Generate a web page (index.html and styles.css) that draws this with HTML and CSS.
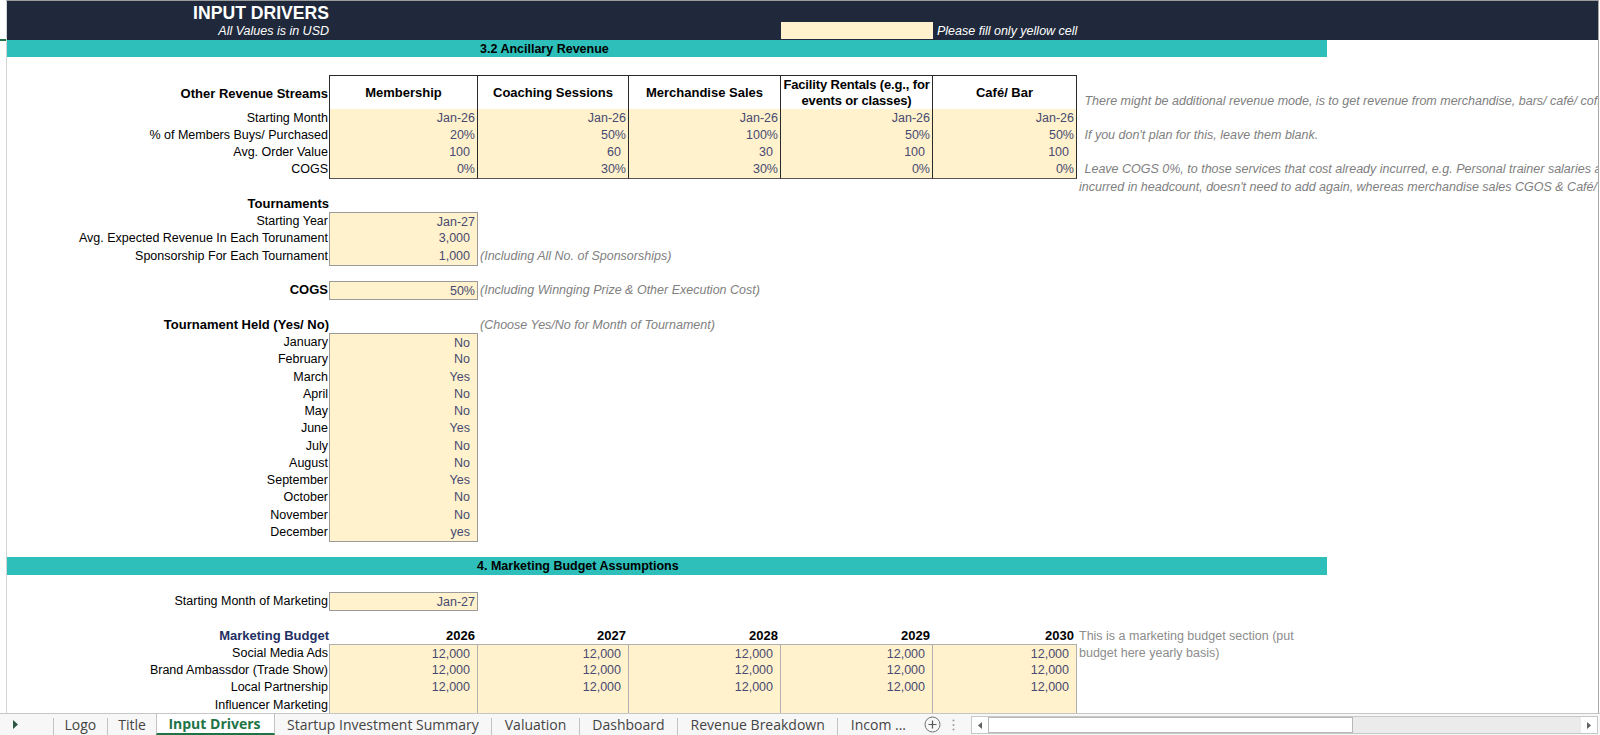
FILE: index.html
```html
<!DOCTYPE html>
<html lang="en">
<head>
<meta charset="utf-8">
<title>Input Drivers</title>
<link rel="stylesheet" href="styles.css">
</head>
<body>
<div class="app">
  <div class="sheet">
    <div class="hdr">
      <div class="hrow1"><div class="title">INPUT DRIVERS</div></div>
      <div class="grid hrow2">
        <div class="sub">All Values is in USD</div>
        <div class="hspace"></div>
        <div class="ycell"></div>
        <div class="hnote">Please fill only yellow cell</div>
      </div>
    </div>

    <div class="band band1">3.2 Ancillary Revenue</div>
    <div class="row"></div>

    <div class="grid th">
      <div class="lbl b thl">Other Revenue Streams</div>
      <div class="hc">Membership</div>
      <div class="hc">Coaching Sessions</div>
      <div class="hc">Merchandise Sales</div>
      <div class="hc tight">Facility Rentals (e.g., for<br>events or classes)</div>
      <div class="hc">Café/ Bar</div>
      <div class="note nb">&nbsp;There might be additional revenue mode, is to get revenue from merchandise, bars/ café/ coffee shop etc.</div>
    </div>
    <div class="row dk">
      <div class="lbl bd">Starting Month</div>
      <div class="k">Jan-26</div><div class="k">Jan-26</div><div class="k">Jan-26</div><div class="k">Jan-26</div><div class="k">Jan-26</div>
    </div>
    <div class="row dk">
      <div class="lbl bd">% of Members Buys/ Purchased</div>
      <div class="k">20%</div><div class="k">50%</div><div class="k">100%</div><div class="k">50%</div><div class="k">50%</div>
      <div class="note">&nbsp;If you don't plan for this, leave them blank.</div>
    </div>
    <div class="row dk">
      <div class="lbl bd">Avg. Order Value</div>
      <div class="k n">100</div><div class="k n">60</div><div class="k n">30</div><div class="k n">100</div><div class="k n">100</div>
    </div>
    <div class="row dk last">
      <div class="lbl bd">COGS</div>
      <div class="k">0%</div><div class="k">30%</div><div class="k">30%</div><div class="k">0%</div><div class="k">0%</div>
      <div class="note">&nbsp;Leave COGS 0%, to those services that cost already incurred, e.g. Personal trainer salaries are already</div>
    </div>
    <div class="row">
      <div class="lbl"></div>
      <div class="note wide">incurred in headcount, doesn't need to add again, whereas merchandise sales CGOS &amp; Café/ Bar COGS are separate.</div>
    </div>

    <div class="row"><div class="lbl b">Tournaments</div></div>
    <div class="row top">
      <div class="lbl bd">Starting Year</div>
      <div class="k">Jan-27</div>
    </div>
    <div class="row">
      <div class="lbl bd">Avg. Expected Revenue In Each Torunament</div>
      <div class="k n">3,000</div>
    </div>
    <div class="row">
      <div class="lbl bd">Sponsorship For Each Tournament</div>
      <div class="k n">1,000</div>
      <div class="note span">(Including All No. of Sponsorships)</div>
    </div>
    <div class="row"></div>
    <div class="row top">
      <div class="lbl b bd">COGS</div>
      <div class="k">50%</div>
      <div class="note span">(Including Winnging Prize &amp; Other Execution Cost)</div>
    </div>
    <div class="row"></div>
    <div class="row">
      <div class="lbl b">Tournament Held (Yes/ No)</div>
      <div class="blank"></div>
      <div class="note span">(Choose Yes/No for Month of Tournament)</div>
    </div>
    <div class="row top"><div class="lbl bd">January</div><div class="k n">No</div></div>
    <div class="row"><div class="lbl bd">February</div><div class="k n">No</div></div>
    <div class="row"><div class="lbl bd">March</div><div class="k n">Yes</div></div>
    <div class="row"><div class="lbl bd">April</div><div class="k n">No</div></div>
    <div class="row"><div class="lbl bd">May</div><div class="k n">No</div></div>
    <div class="row"><div class="lbl bd">June</div><div class="k n">Yes</div></div>
    <div class="row"><div class="lbl bd">July</div><div class="k n">No</div></div>
    <div class="row"><div class="lbl bd">August</div><div class="k n">No</div></div>
    <div class="row"><div class="lbl bd">September</div><div class="k n">Yes</div></div>
    <div class="row"><div class="lbl bd">October</div><div class="k n">No</div></div>
    <div class="row"><div class="lbl bd">November</div><div class="k n">No</div></div>
    <div class="row"><div class="lbl bd">December</div><div class="k n">yes</div></div>
    <div class="row"></div>

    <div class="band band2">4. Marketing Budget Assumptions</div>
    <div class="row"></div>
    <div class="row top">
      <div class="lbl bd">Starting Month of Marketing</div>
      <div class="k">Jan-27</div>
    </div>
    <div class="row"></div>
    <div class="row">
      <div class="lbl b navy">Marketing Budget</div>
      <div class="yr">2026</div><div class="yr">2027</div><div class="yr">2028</div><div class="yr">2029</div><div class="yr">2030</div>
      <div class="mnote">This is a marketing budget section (put</div>
    </div>
    <div class="row top mk">
      <div class="lbl bd">Social Media Ads</div>
      <div class="k n">12,000</div><div class="k n">12,000</div><div class="k n">12,000</div><div class="k n">12,000</div><div class="k n">12,000</div>
      <div class="mnote">budget here yearly basis)</div>
    </div>
    <div class="row mk">
      <div class="lbl bd">Brand Ambassdor (Trade Show)</div>
      <div class="k n">12,000</div><div class="k n">12,000</div><div class="k n">12,000</div><div class="k n">12,000</div><div class="k n">12,000</div>
    </div>
    <div class="row mk">
      <div class="lbl bd">Local Partnership</div>
      <div class="k n">12,000</div><div class="k n">12,000</div><div class="k n">12,000</div><div class="k n">12,000</div><div class="k n">12,000</div>
    </div>
    <div class="row mk">
      <div class="lbl bd">Influencer Marketing</div>
      <div class="k"></div><div class="k"></div><div class="k"></div><div class="k"></div><div class="k"></div>
    </div>
  </div>

  <div class="tabbar">
    <div class="tabs">
      <div class="nav">
        <svg width="6" height="9" viewBox="0 0 6 9"><polygon points="0,0 5,4.5 0,9" fill="#2f5640"/></svg>
      </div>
      <span class="sep"></span>
      <div class="tab s">Logo</div>
      <span class="sep"></span>
      <div class="tab s">Title</div>
      <div class="tab active">Input Drivers</div>
      <div class="tab">Startup Investment Summary</div>
      <span class="sep"></span>
      <div class="tab">Valuation</div>
      <span class="sep"></span>
      <div class="tab">Dashboard</div>
      <span class="sep"></span>
      <div class="tab">Revenue Breakdown</div>
      <span class="sep"></span>
      <div class="tab">Incom ...</div>
      <div class="add">
        <svg width="17" height="17" viewBox="0 0 17 17"><circle cx="8.5" cy="8.5" r="7.5" fill="none" stroke="#6f6f6f" stroke-width="1"/><path d="M8.5 4.5v8M4.5 8.5h8" stroke="#555" stroke-width="1.2"/></svg>
      </div>
      <div class="dots">
        <svg width="3" height="12" viewBox="0 0 3 12"><circle cx="1.5" cy="1.5" r="1" fill="#999"/><circle cx="1.5" cy="6" r="1" fill="#999"/><circle cx="1.5" cy="10.5" r="1" fill="#999"/></svg>
      </div>
    </div>
    <div class="hscroll">
      <div class="arr"><svg width="4" height="7" viewBox="0 0 4 7"><polygon points="4,0 0,3.5 4,7" fill="#606060"/></svg></div>
      <div class="thumb"></div>
      <div class="track"></div>
      <div class="arr"><svg width="4" height="7" viewBox="0 0 4 7"><polygon points="0,0 4,3.5 0,7" fill="#606060"/></svg></div>
    </div>
  </div>
</div>
</body>
</html>
```

FILE: styles.css
```css
* { box-sizing: border-box; margin: 0; padding: 0; }
html, body { width: 1600px; height: 735px; overflow: hidden; background: #fff; }
body {
  font-family: "Liberation Sans", Arial, sans-serif;
  font-size: 12.5px;
  color: #000;
}
.app { display: flex; flex-direction: column; height: 735px; position: relative; }
.app::before {
  content: "";
  position: absolute;
  left: 0; top: 39px;
  width: 6px; height: 2px;
  background: #217346;
}
.sheet {
  flex: 1;
  overflow: hidden;
  margin-left: 6px;
  width: 1593px;
  border-left: 1px solid #d4d4d4;
  border-right: 1px solid #a8a8a8;
  border-top: 1px solid #9c9c9c;
}

.grid, .row {
  display: grid;
  grid-template-columns: 323px 148px 151px 152px 152px 144px 1fr;
  white-space: nowrap;
}
.row { height: 17.27px; line-height: 18px; }

/* header band */
.hdr { background: #1f293b; height: 39px; color: #fff; }
.hrow1 { height: 21px; }
.title {
  width: 323px;
  text-align: right;
  padding-right: 1px;
  font-weight: bold;
  font-size: 17.6px;
  line-height: 24px;
}
.hrow2 { height: 18px; line-height: 18px; }
.sub { text-align: right; font-style: italic; padding-right: 1px; }
.hspace { grid-column: 2 / 5; }
.ycell { background: #fff2cc; height: 17px; }
.hnote { grid-column: 6 / -1; font-style: italic; padding-left: 4px; }

/* section bands */
.band {
  width: 1320px;
  height: 17.27px;
  line-height: 18px;
  background: #2ebfba;
  font-weight: bold;
  font-size: 12.5px;
}
.band1 { padding-left: 473px; }
.band2 { padding-left: 470px; }

/* labels */
.lbl { text-align: right; padding-right: 1px; }
.b { font-weight: bold; font-size: 13px; }
.navy { color: #1f2f63; }
.bd { border-right: 1px solid #9a9a9a; }

/* yellow input cells */
.k {
  background: #fff2cc;
  color: #474a72;
  text-align: right;
  padding-right: 2px;
  border-right: 1px solid #9a9a9a;
  border-bottom: 1px solid #9a9a9a;
}
.k.n { padding-right: 7px; }
.top .k { border-top: 1px solid #9a9a9a; }
.top .k, .top .lbl { line-height: 16px; padding-top: 1px; }

/* first table */
.th { height: 34px; }
.thl { border-right: 1px solid #2a2a2a; display: flex; align-items: center; justify-content: flex-end; padding-top: 2px; }
.hc {
  display: flex;
  align-items: center;
  justify-content: center;
  text-align: center;
  white-space: normal;
  font-weight: bold;
  font-size: 13px;
  line-height: 16px;
  background: #fff;
  border-top: 1px solid #2a2a2a;
  border-right: 1px solid #2a2a2a;
  border-bottom: 1px solid #2a2a2a;
  padding: 2px 2px 0;
}
.hc.tight { white-space: nowrap; padding: 1px 0 0; letter-spacing: -0.15px; }
.dk .bd { border-right-color: #2a2a2a; }
.dk .k { border-right-color: #2a2a2a; border-bottom-color: #a8a8a8; }
.dk.last .k { border-bottom-color: #555; }

/* notes */
.note {
  color: #808080;
  font-style: italic;
  padding-left: 4px;
}
.nb { align-self: end; line-height: 16px; padding-bottom: 1px; }
.note.wide { grid-column: 7 / -1; padding-left: 2px; }
.note.span { grid-column: 3 / -1; padding-left: 2px; }
.mnote { grid-column: 7 / -1; color: #8c8c8c; padding-left: 2px; }

/* marketing */
.yr { text-align: right; font-weight: bold; font-size: 13px; padding-right: 3px; }
.mk .k { border-right-color: #b0b0b0; border-bottom-color: #b0b0b0; }
.mk.top .k { border-top-color: #b0b0b0; }
.mk .bd { border-right-color: #b0b0b0; }

/* sheet tabs */
.tabbar {
  height: 22px;
  flex: none;
  display: flex;
  background: #f7f7f7;
  border-top: 1px solid #c6c6c6;
  font-family: "Open Sans", "Noto Sans", sans-serif;
  font-size: 14px;
  color: #444;
}
.tabs {
  width: 971px;
  flex: none;
  display: flex;
  align-items: stretch;
  overflow: hidden;
}
.nav { width: 53px; display: flex; align-items: center; padding-left: 13px; }
.sep { width: 1px; background: #c3c3c3; margin-top: 4px; }
.tab {
  display: flex;
  align-items: center;
  padding: 0 12.5px;
  white-space: nowrap;
  line-height: 20px;
}
.tab.s { padding: 0 10.5px; }
.tab.active {
  background: #fff;
  color: #217346;
  font-weight: bold;
  border-left: 1px solid #c3c3c3;
  border-right: 1px solid #c3c3c3;
  border-bottom: 2px solid #217346;
  padding: 0 13px 0 11px;
}
.add { display: flex; align-items: center; padding-left: 5px; }
.dots { display: flex; align-items: center; padding-left: 11px; }
.hscroll {
  flex: 1;
  display: flex;
  height: 18px;
  margin-top: 2px;
  margin-right: 2px;
  border: 1px solid #c8c8c8;
  background: #ebebeb;
}
.arr {
  width: 16px;
  display: flex;
  align-items: center;
  justify-content: center;
  background: #fff;
}
.thumb { width: 365px; background: #fff; border: 1px solid #b8b8b8; }
.track { flex: 1; }
```
